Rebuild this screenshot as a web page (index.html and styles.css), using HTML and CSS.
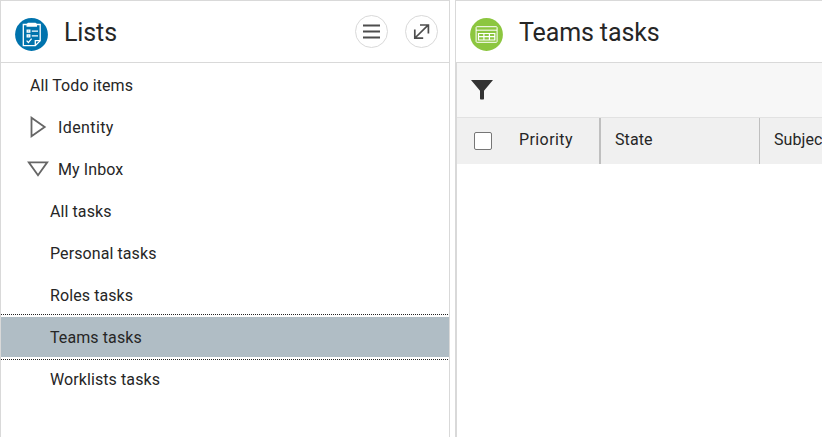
FILE: index.html
```html
<!DOCTYPE html>
<html lang="en">
<head>
<meta charset="utf-8">
<title>Lists</title>
<link rel="stylesheet" href="styles.css">
</head>
<body>
<div class="app">
  <section class="panel lists">
    <header class="panel-header">
      <svg class="badge" viewBox="0 0 33 33">
        <circle cx="16.5" cy="16.5" r="16.4" fill="#0073ad"/>
        <g fill="none" stroke="#fff" stroke-width="1.3">
          <path d="M12 6.5H8.3V27.6H20.3L25.2 22.7V6.5H21"/>
          <path d="M20.3 27.6V22.7H25.2"/>
          <path d="M12.2 12.2h2.6v1.8h-2.6zM12.2 17h2.6v1.8h-2.6zM11.6 22.6l1.8 2 3.2-4"/>
          <path d="M16.8 13.2H23M16.8 17.9H23"/>
        </g>
        <path d="M11.5 8.7V5.9L13 4.8h7.5L22 5.9v2.8z" fill="#fff"/>
      </svg>
      <h1 class="title">Lists</h1>
      <button class="round" aria-label="Menu">
        <svg viewBox="0 0 31 31"><path d="M7 9.5H24M7 15.5H24M7 21.5H24" stroke="#4d4d4d" stroke-width="1.8" fill="none"/></svg>
      </button>
      <button class="round" aria-label="Expand">
        <svg viewBox="0 0 31 31"><path d="M9 22L22.3 8.9M14 9H22.4V17.5M8.8 13.5V22.2H17.2" stroke="#4d4d4d" stroke-width="1.7" fill="none"/></svg>
      </button>
    </header>
    <ul class="tree">
      <li class="item root">All Todo items</li>
      <li class="item node"><svg class="arrow" viewBox="0 0 22 22"><path d="M4.5 1.7V20.2L17.7 11z"/></svg><span class="wide">Identity</span></li>
      <li class="item node"><svg class="arrow" viewBox="0 0 22 22"><path d="M1.8 4.4H20.2L11 17.2z"/></svg>My Inbox</li>
      <li class="item leaf">All tasks</li>
      <li class="item leaf">Personal tasks</li>
      <li class="item leaf">Roles tasks</li>
      <li class="item leaf selected">Teams tasks</li>
      <li class="item leaf">Worklists tasks</li>
    </ul>
  </section>
  <section class="panel tasks">
    <header class="panel-header">
      <svg class="badge" viewBox="0 0 33 33">
        <circle cx="16.5" cy="16.5" r="16.4" fill="#8cc63f"/>
        <g fill="none" stroke="#fff">
          <rect x="6.1" y="8.7" width="21" height="15.6" rx=".8"/>
          <path d="M6 12.2H27"/>
          <path d="M8.5 15.5H24.8V22H8.5zM8.5 18.7H24.8M13.9 15.5V22M19.4 15.5V22" stroke-width="1.2"/>
        </g>
      </svg>
      <h1 class="title">Teams tasks</h1>
    </header>
    <div class="content">
      <div class="toolbar">
        <svg class="filter" viewBox="0 0 22 20"><path d="M0 0H22L13 10.7V18.6Q13 19.5 12.3 19.5H9.7Q9 19.5 9 18.6V10.7z" fill="#333"/></svg>
      </div>
      <div class="grid-head">
        <div class="check"><input type="checkbox" aria-label="Select all"></div>
        <div class="col priority wide">Priority</div>
        <div class="col state">State</div>
        <div class="col subject">Subject</div>
      </div>
    </div>
  </section>
</div>
</body>
</html>
```
FILE: styles.css
```css
* { box-sizing: border-box; }
body {
  margin: 0;
  overflow: hidden;
  background: #fff;
  color: #262626;
  font: 400 16px/20px Roboto, "Liberation Sans", sans-serif;
  letter-spacing: 0.09px;
}
.app { display: flex; gap: 5px; width: 822px; height: 437px; }
.panel { border-top: 1px solid #d9d9d9; border-left: 1px solid #d9d9d9; overflow: hidden; }
.lists { width: 450px; flex: none; border-right: 1px solid #d9d9d9; }
.tasks { flex: 1; min-width: 0; }
.panel-header {
  display: flex;
  align-items: center;
  height: 62px;
  padding: 0 11px 0 14px;
  border-bottom: 1px solid #d9d9d9;
}
.badge { width: 33px; height: 33px; margin-top: 6px; }
.title { flex: 1; margin: 2px 0 0 16px; font-size: 25px; line-height: 32px; font-weight: 400; letter-spacing: -0.12px; }
.round {
  width: 33px;
  height: 33px;
  margin-left: 17px;
  padding: 0;
  border: 1px solid #d9d9d9;
  border-radius: 50%;
  background: #fff;
}
.round svg { display: block; width: 31px; height: 31px; }
.tree {
  display: grid;
  gap: 2px;
  margin: 0;
  padding: 2px 0 4px;
  overflow: hidden;
  list-style: none;
}
.item { display: flex; align-items: center; height: 40px; padding-top: 2px; white-space: nowrap; }
.root { padding-left: 29px; }
.node { padding-left: 26px; }
.leaf { padding-left: 49px; }
.wide { letter-spacing: 0.4px; }
.arrow { width: 22px; height: 22px; margin: -2px 9px 0 0; fill: none; stroke: #666; stroke-width: 1.8; }
.selected { background: #b0bdc5; outline: 1px dotted #222; outline-offset: 2px; }
.content { height: 375px; border-left: 1px solid #d9d9d9; }
.toolbar { height: 55px; padding: 17px 14px; background: #f7f7f7; border-bottom: 1px solid #e2e2e2; }
.filter { display: block; width: 22px; height: 20px; }
.grid-head { display: flex; height: 46px; background: #f0f0f0; overflow: hidden; }
.check { flex: none; width: 47px; padding: 14px 0 0 17px; }
.check input {
  display: block;
  appearance: none;
  width: 18px;
  height: 18px;
  margin: 0;
  border: 1px solid #767676;
  border-radius: 2px;
  background: #fff;
}
.col { flex: none; padding: 12px 0 0 15px; }
.priority { width: 97px; border-right: 2px solid #bfbfbf; }
.state { width: 159px; padding-left: 14px; border-right: 1px solid #bfbfbf; }
.subject { width: 160px; padding-left: 14px; }
```
